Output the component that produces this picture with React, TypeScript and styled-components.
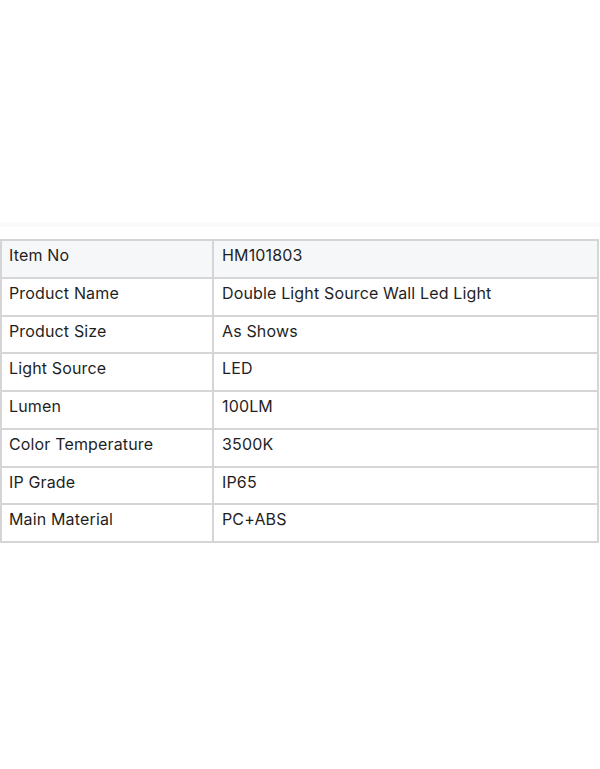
import React from "react";
import styled, { createGlobalStyle } from "styled-components";

const GlobalStyle = createGlobalStyle`
  html, body {
    margin: 0;
    padding: 0;
    background: #ffffff;
  }
  body {
    font-family: "Inter", "Liberation Sans", sans-serif;
  }
`;

const specs: [string, string][] = [
  ["Item No", "HM101803"],
  ["Product Name", "Double Light Source Wall Led Light"],
  ["Product Size", "As Shows"],
  ["Light Source", "LED"],
  ["Lumen", "100LM"],
  ["Color Temperature", "3500K"],
  ["IP Grade", "IP65"],
  ["Main Material", "PC+ABS"],
];

export default function App() {
  return (
    <>
      <GlobalStyle />
      <Page>
        <Band />
        <SpecTable>
          {specs.map(([label, value], i) => (
            <Row key={label} $head={i === 0}>
              <LabelCell>{label}</LabelCell>
              <ValueCell>{value}</ValueCell>
            </Row>
          ))}
        </SpecTable>
      </Page>
    </>
  );
}

const Page = styled.div`
  width: 600px;
  height: 769px;
  padding-top: 222px;
  box-sizing: border-box;
  display: flex;
  flex-direction: column;
`;

const Band = styled.div`
  height: 5px;
  background: #fafafa;
  margin-bottom: 12px;
`;

const SpecTable = styled.div`
  width: 599px;
  border-top: 2px solid #d5d5d7;
  border-left: 2px solid #d5d5d7;
  box-sizing: border-box;
  display: flex;
  flex-direction: column;
`;

const Row = styled.div<{ $head: boolean }>`
  display: grid;
  grid-template-columns: 212px 1fr;
  height: 37.75px;
  background: ${(p) => (p.$head ? "#f6f7f9" : "#ffffff")};
`;

const Cell = styled.div`
  border-right: 2px solid #d5d5d7;
  border-bottom: 2px solid #d5d5d7;
  font-size: 16px;
  letter-spacing: 0.15px;
  color: #1f1f1f;
  padding: 4px 0 0;
  line-height: 21px;
  white-space: nowrap;
`;

const LabelCell = styled(Cell)`
  padding-left: 7px;
`;

const ValueCell = styled(Cell)`
  padding-left: 8px;
`;
